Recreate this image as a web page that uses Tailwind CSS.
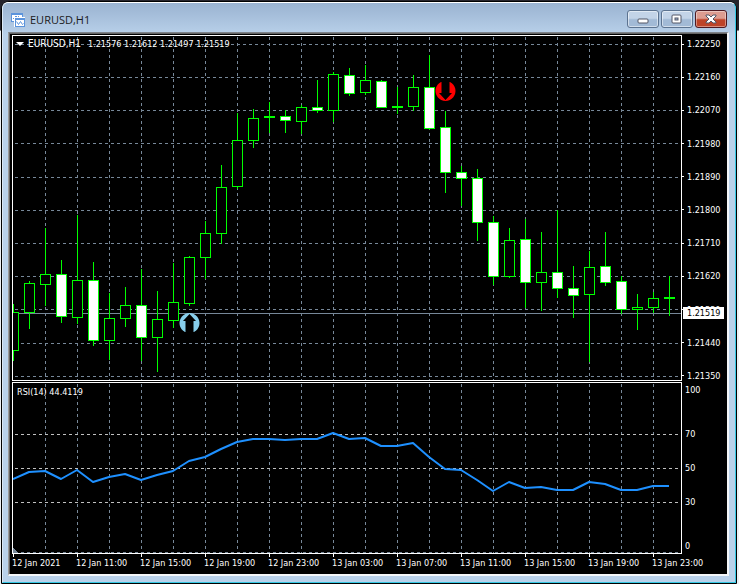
<!DOCTYPE html>
<html lang="en">
<head>
    <meta charset="UTF-8">
    <meta name="viewport" content="width=device-width, initial-scale=1.0">
    <title>EURUSD,H1</title>
    <script src="https://cdn.jsdelivr.net/npm/@tailwindcss/browser@4"></script>
</head>
<body class="bg-linear-to-b from-[#26242c] from-[30px] to-[#eef1f5] to-[31px] min-h-screen flex">

    <div class="flex-1 min-w-0 flex flex-col mt-px ml-px mr-[2px] border border-black rounded-t-lg bg-[#b9d1ea]">
        <div class="flex-1 flex flex-col border border-t-white border-l-[#dbe8f5] border-r-[#35c8e4] border-b-[#35c8e4] rounded-t-md pl-[5px] pr-[6px] pb-[6px] bg-linear-to-b from-[#9ab3d1] to-[#b9d1ea] to-[32px]">

            <header class="flex items-start justify-between h-[29px] pl-[3px] pr-[2px]">
                <h1 class="flex items-center gap-[5px] h-[34px] text-[11px] text-[#1b1b1b] font-['Open_Sans',sans-serif]">
                    <svg class="w-[14px] h-[14px]" viewBox="0 0 14 14" shape-rendering="crispEdges">
                        <rect x="0" y="0" width="12" height="9" fill="#5b94dc"/>
                        <rect x="1" y="2" width="10" height="6" fill="#fff"/>
                        <path d="M2 5h2V3h1v3h2V3h1" fill="none" stroke="#5b94dc"/>
                        <rect x="3" y="4" width="11" height="10" fill="#fff"/>
                        <rect x="4" y="5" width="10" height="9" fill="#5b94dc"/>
                        <rect x="5" y="7" width="8" height="6" fill="#fff"/>
                        <path d="M5.500 8.500l2 3 2-3 2 3 1-1" fill="none" stroke="#5b94dc" shape-rendering="auto"/>
                    </svg>
                    EURUSD,H1
                </h1>
                <div class="flex gap-[2px] pt-[7px]">
                    <button type="button" aria-label="Minimize" class="flex items-center justify-center w-8 h-[18px] rounded-[3px] border border-[#5c7390] bg-linear-to-b from-[#c3d4e8] from-45% to-[#a2bad6] to-55% inset-ring inset-ring-white/50">
                        <svg class="w-3 h-[6px] mt-[3px]" viewBox="0 0 12 6"><rect x="1" y="1" width="10" height="4" rx="1" fill="#fff" stroke="#535666"/></svg>
                    </button>
                    <button type="button" aria-label="Maximize" class="flex items-center justify-center w-8 h-[18px] rounded-[3px] border border-[#5c7390] bg-linear-to-b from-[#c3d4e8] from-45% to-[#a2bad6] to-55% inset-ring inset-ring-white/50">
                        <svg class="w-3 h-[10px]" viewBox="0 0 12 10"><rect x="1" y="1" width="9" height="8" rx="1" fill="#fff" stroke="#535666"/><rect x="4" y="4" width="3" height="2" fill="#a2bad6" stroke="#535666"/></svg>
                    </button>
                    <button type="button" aria-label="Close" class="flex items-center justify-center w-8 h-[18px] rounded-[3px] border border-[#4e1a22] bg-linear-to-b from-[#dd9c90] from-45% to-[#bd4429] to-55% inset-ring inset-ring-white/40">
                        <svg class="w-3 h-[10px]" viewBox="0 0 12 10"><path d="M1 1h3l2 2 2-2h3v1L8 5l3 3v1H8L6 7 4 9H1V8l3-3-3-3z" fill="#fff" stroke="#535666"/></svg>
                    </button>
                </div>
            </header>

            <main class="flex-1 flex flex-col border-t border-l border-t-[#7d8288] border-l-[#9a9a9a] border-r-2 border-b-2 border-r-[#f4f6f8] border-b-[#f4f6f8]">
                <div class="flex-1 flex flex-col bg-black border-t border-l border-[#646464] pt-px pl-[2px] text-[9px] leading-3 text-white font-['DejaVu_Sans_Condensed','DejaVu_Sans',sans-serif] font-stretch-condensed">

                    <section class="flex-1 flex min-h-[346px]">
                        <div class="relative flex-1 min-w-0 border border-white">
                            <svg id="priceChart" class="absolute w-full h-full" shape-rendering="crispEdges"></svg>
                            <div class="absolute left-[3px] top-[2px] flex items-center whitespace-nowrap">
                                <button type="button" aria-label="One click trading" class="w-3">
                                    <svg class="w-2 h-1" viewBox="0 0 8 4"><path d="M0 0h8L4 4z" fill="#fff"/></svg>
                                </button>
                                <p class="w-[60px] text-[10px]">EURUSD,H1</p>
                                <p>1.21576 1.21612 1.21497 1.21519</p>
                            </div>
                        </div>
                        <div class="relative w-[45px]">
                            <ul id="priceAxis" class="absolute inset-x-0 top-[3px] -bottom-px flex flex-col justify-between"></ul>
                            <p class="absolute left-px top-[272px] w-[41px] h-[12px] pl-1 bg-white text-black">1.21519</p>
                        </div>
                    </section>

                    <section class="flex h-[172px] mt-px">
                        <div class="relative flex-1 min-w-0 border border-white">
                            <svg id="rsiChart" class="absolute w-full h-full" shape-rendering="crispEdges"></svg>
                            <p class="absolute left-1 top-[3px]">RSI(14) 44.4119</p>
                        </div>
                        <ul class="w-[45px] pt-[2px] pl-[3px]">
                            <li>100</li>
                            <li class="mt-8">70</li>
                            <li class="mt-[22px]">50</li>
                            <li class="mt-[22px]">30</li>
                            <li class="mt-8">0</li>
                        </ul>
                    </section>

                    <ul id="timeAxis" class="flex h-5 overflow-hidden"></ul>
                </div>
            </main>
        </div>
    </div>

    <script>
        const STEP = 16;          // pixels per bar
        const GRID = '#778899';
        const UP = '#00ff00';

        // Bars: high, body top, body bottom, low, 1 = falling bar
        const bars = [
            [268, 276, 314, 324, 0], [245, 247, 276, 292, 0], [192, 238, 248, 269, 0], [224, 238, 280, 286, 1],
            [179, 244, 281, 287, 0], [226, 244, 304, 309, 1], [257, 282, 304, 323, 0], [251, 269, 282, 290, 0],
            [233, 269, 301, 324, 1], [255, 283, 301, 335, 0], [227, 266, 284, 291, 0], [220, 221, 267, 269, 0],
            [185, 197, 221, 242, 0], [129, 151, 197, 207, 0], [77, 104, 150, 152, 0], [73, 82, 104, 111, 0],
            [66, 80, 81, 96, 0], [74, 80, 84, 96, 1], [69, 71, 85, 97, 0], [44, 71, 74, 76, 1],
            [36, 38, 74, 85, 0], [32, 39, 57, 59, 1], [29, 44, 56, 58, 0], [44, 45, 71, 71, 1],
            [51, 70, 71, 77, 0], [39, 51, 70, 74, 0], [19, 51, 92, 93, 1], [75, 91, 136, 156, 1],
            [130, 136, 142, 169, 1], [133, 142, 186, 204, 1], [180, 186, 240, 248, 1], [192, 204, 240, 241, 0],
            [183, 203, 246, 271, 1], [196, 236, 246, 274, 0], [174, 236, 252, 261, 1], [230, 252, 259, 281, 1],
            [215, 231, 258, 325, 0], [196, 230, 246, 249, 1], [240, 245, 273, 277, 1], [258, 271, 273, 293, 0],
            [256, 262, 271, 276, 0], [240, 261, 262, 279, 0]
        ];
        const rsi = [96, 89, 88, 96, 87, 99, 94, 91, 97, 92, 88, 78, 74, 66, 59, 56, 56, 57, 56, 56, 50, 56, 55, 63, 63, 60,
            74, 86, 87, 97, 108, 99, 105, 104, 107, 107, 99, 101, 107, 107, 103, 103];

        const dash = (x1, y1, x2, y2, color) =>
            `<line x1="${x1}" y1="${y1}" x2="${x2}" y2="${y2}" stroke="${color}" stroke-dasharray="3 3"/>`;

        function verticalGrid() {
            let out = '';
            for (let x = 32; x < 660; x += 32) out += dash(x, 0, x, '100%', GRID);
            return out;
        }

        // Price window
        let svg = '<g transform="translate(.5 .5)">' + verticalGrid();
        [8, 41, 74, 107, 141, 174, 207, 240, 273, 307, 340].forEach(y => { svg += dash(1, y, '100%', y, GRID); });
        svg += `<line x1="0" y1="277" x2="100%" y2="277" stroke="${GRID}"/></g>`;
        bars.forEach(([high, top, bottom, low, down], i) => {
            const x = i * STEP;
            svg += `<rect x="${x}" y="${high}" width="1" height="${low - high + 1}" fill="${UP}"/>`;
            svg += `<rect x="${x - 5}" y="${top}" width="11" height="${bottom - top + 1}" fill="${UP}"/>`;
            if (bottom - top > 1) {
                svg += `<rect x="${x - 4}" y="${top + 1}" width="9" height="${bottom - top - 1}" fill="${down ? '#fff' : '#000'}"/>`;
            }
        });
        // Buy and sell signals
        svg += `<g shape-rendering="auto">
            <path d="M172 296A10 10 0 1 1 181 296Z" fill="#87ceeb"/>
            <path d="M176.500 278L183 285H180.500V297H172.500V285H170Z" fill="#000"/>
            <path d="M428 46A10 10 0 1 0 437 46Z" fill="#f00"/>
            <path d="M432.500 64L439 57H436.500V45H428.500V57H426Z" fill="#000"/>
        </g>`;
        document.getElementById('priceChart').innerHTML = svg;

        // RSI window
        let ind = '<g transform="translate(.5 .5)">' + verticalGrid();
        [51, 85, 119].forEach(y => { ind += dash(1, y, '100%', y, '#c0c0c0'); });
        ind += dash(1, 169, '100%', 169, GRID) + '</g>';
        ind += `<path d="M0 165L5 170H0Z" fill="${GRID}"/>`;
        ind += `<polyline points="${rsi.map((y, i) => i * STEP + ',' + y).join(' ')}" fill="none" stroke="#1e90ff" stroke-width="2" stroke-linejoin="round" shape-rendering="auto"/>`;
        document.getElementById('rsiChart').innerHTML = ind;

        // Axes
        const prices = ['1.22250', '1.22160', '1.22070', '1.21980', '1.21890', '1.21800', '1.21710', '1.21620', '1.21530', '1.21440', '1.21350'];
        document.getElementById('priceAxis').innerHTML = prices.map(p =>
            `<li class="flex items-center gap-[3px]"><span class="w-[2px] h-px bg-white"></span>${p}</li>`).join('');

        const times = ['12 Jan 2021', '12 Jan 11:00', '12 Jan 15:00', '12 Jan 19:00', '12 Jan 23:00', '13 Jan 03:00', '13 Jan 07:00', '13 Jan 11:00', '13 Jan 15:00', '13 Jan 19:00', '13 Jan 23:00'];
        document.getElementById('timeAxis').innerHTML = times.map(t =>
            `<li class="w-16 shrink-0 whitespace-nowrap"><span class="block w-px h-[3px] ml-px bg-white"></span>${t}</li>`).join('');
    </script>

</body>
</html>
